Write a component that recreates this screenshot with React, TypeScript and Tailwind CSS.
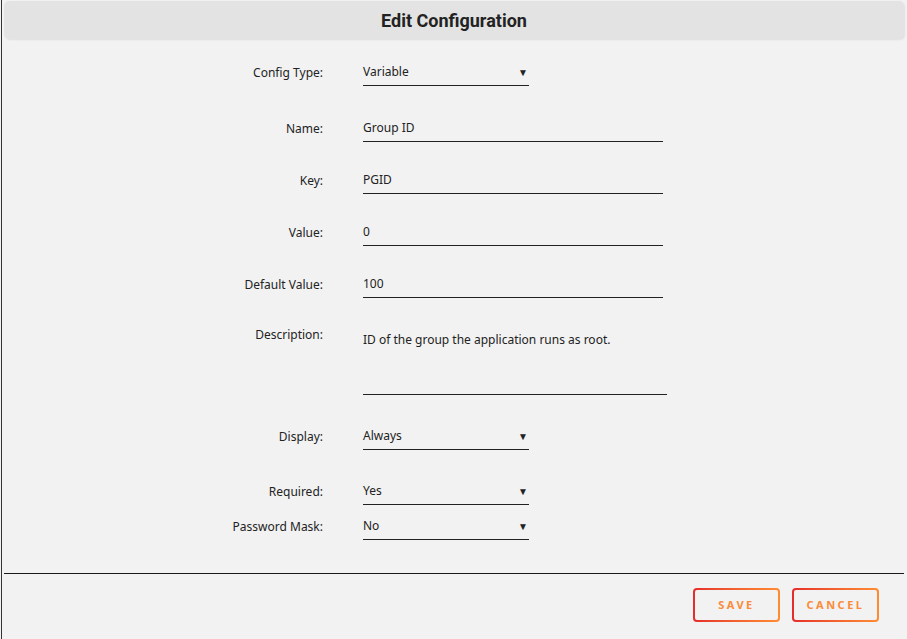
import React from "react";

const font = { fontFamily: '"Noto Sans", "Open Sans", sans-serif' };

function Label({ children, top = false }: { children: React.ReactNode; top?: boolean }) {
  return (
    <div className={`w-[321px] shrink-0 text-right text-[12px] leading-[16px] text-[#222] ${top ? "pt-[1px]" : "pb-[3px]"}`}>
      {children}
    </div>
  );
}

function TextField({ value }: { value: string }) {
  return (
    <div className="ml-[40px] w-[300px] h-[24px] pb-[3px] flex items-center border-b border-[#222] text-[12px] text-[#222]">
      {value}
    </div>
  );
}

function SelectField({ value }: { value: string }) {
  return (
    <div className="ml-[40px] w-[166px] h-[24px] pb-[3px] flex items-center justify-between border-b border-[#222] text-[12px] text-[#222]">
      <span>{value}</span>
      <span className="text-[10px] mr-[1px]">▼</span>
    </div>
  );
}

function Row({ label, children, mt }: { label: string; children: React.ReactNode; mt: string }) {
  return (
    <div className={`flex items-center ${mt}`}>
      <Label>{label}</Label>
      {children}
    </div>
  );
}

function GradButton({ text }: { text: string }) {
  return (
    <div className="rounded-[4px] bg-gradient-to-r from-[#e52b2b] to-[#ff8c33] p-[2px]">
      <div className="flex h-[30px] w-[83px] items-center justify-center rounded-[2px] bg-[#f2f2f2] text-[11px] font-bold tracking-[2.5px] text-[#fa8b3a]">
        {text}
      </div>
    </div>
  );
}

export default function App() {
  return (
    <div className="min-h-[639px] w-[907px] bg-[#f2f2f2]" style={font}>
      <div className="ml-[1px] h-[639px] border-l border-[#333] flex flex-col">
        <div className="ml-[2px] mr-[3px] mt-[1px] h-[38px] rounded-[5px] bg-[#e3e3e3] shadow-[1px_1px_2px_rgba(0,0,0,0.08)] flex items-center justify-center">
          <span className="text-[18px] font-bold text-[#222]" style={{ fontFamily: 'Roboto, "Noto Sans", sans-serif' }}>
            Edit Configuration
          </span>
        </div>

        <div className="flex flex-col">
          <Row label="Config Type:" mt="mt-[23px]">
            <SelectField value="Variable" />
          </Row>
          <Row label="Name:" mt="mt-[32px]">
            <TextField value="Group ID" />
          </Row>
          <Row label="Key:" mt="mt-[28px]">
            <TextField value="PGID" />
          </Row>
          <Row label="Value:" mt="mt-[28px]">
            <TextField value="0" />
          </Row>
          <Row label="Default Value:" mt="mt-[28px]">
            <TextField value="100" />
          </Row>
          <div className="flex items-start mt-[28px]">
            <Label top>Description:</Label>
            <div className="ml-[40px] w-[304px] h-[69px] pt-[6px] border-b border-[#222] text-[12px] leading-[16px] text-[#222]">
              ID of the group the application runs as root.
            </div>
          </div>
          <Row label="Display:" mt="mt-[31px]">
            <SelectField value="Always" />
          </Row>
          <Row label="Required:" mt="mt-[31px]">
            <SelectField value="Yes" />
          </Row>
          <Row label="Password Mask:" mt="mt-[11px]">
            <SelectField value="No" />
          </Row>
        </div>

        <div className="ml-[2px] mr-[3px] mt-[33px] border-t border-[#1a1a1a]" />
        <div className="flex justify-end gap-[12px] mr-[28px] mt-[14px]">
          <GradButton text="SAVE" />
          <GradButton text="CANCEL" />
        </div>
      </div>
    </div>
  );
}
